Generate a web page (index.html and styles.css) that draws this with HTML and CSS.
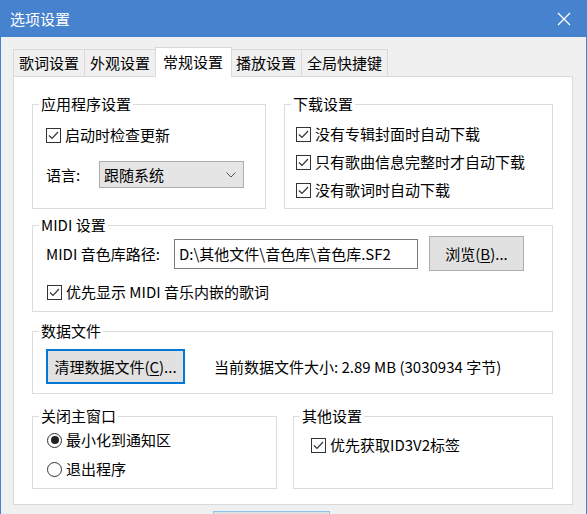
FILE: index.html
```html
<!DOCTYPE html>
<html lang="zh-CN">
<head>
	<meta charset="UTF-8">
	<meta name="viewport" content="width=device-width, initial-scale=1">
	<title>选项设置</title>
	<link rel="stylesheet" href="styles.css">
</head>
<body>
<div class="window">
	<div class="titlebar">
		<span class="title">选项设置</span>
		<svg class="close" width="14" height="14" viewBox="0 0 14 14"><path d="M1 1L13 13M13 1L1 13" stroke="#fff" stroke-width="1.3" fill="none"/></svg>
	</div>
	<div class="client">
		<div class="tabs">
			<div class="tab">歌词设置</div>
			<div class="tab">外观设置</div>
			<div class="tab active">常规设置</div>
			<div class="tab">播放设置</div>
			<div class="tab">全局快捷键</div>
		</div>
		<div class="panel">
			<div class="row top-row">
				<fieldset class="group app">
					<legend>应用程序设置</legend>
					<div class="inner">
						<label class="check">
							<svg class="box" width="15" height="15" viewBox="0 0 15 15"><rect x="0.5" y="0.5" width="14" height="14" fill="#fff" stroke="#333"/><path d="M3 7.5L6 10.5L12 4" stroke="#333" stroke-width="1.2" fill="none"/></svg>
							启动时检查更新
						</label>
						<div class="lang">
							<span class="lang-label">语言:</span>
							<div class="combo">
								<span>跟随系统</span>
								<svg width="10" height="6" viewBox="0 0 10 6"><path d="M0.5 0.5L5 5L9.5 0.5" stroke="#555" stroke-width="1" fill="none"/></svg>
							</div>
						</div>
					</div>
				</fieldset>
				<fieldset class="group download">
					<legend>下载设置</legend>
					<div class="inner">
						<label class="check">
							<svg class="box" width="15" height="15" viewBox="0 0 15 15"><rect x="0.5" y="0.5" width="14" height="14" fill="#fff" stroke="#333"/><path d="M3 7.5L6 10.5L12 4" stroke="#333" stroke-width="1.2" fill="none"/></svg>
							没有专辑封面时自动下载
						</label>
						<label class="check">
							<svg class="box" width="15" height="15" viewBox="0 0 15 15"><rect x="0.5" y="0.5" width="14" height="14" fill="#fff" stroke="#333"/><path d="M3 7.5L6 10.5L12 4" stroke="#333" stroke-width="1.2" fill="none"/></svg>
							只有歌曲信息完整时才自动下载
						</label>
						<label class="check">
							<svg class="box" width="15" height="15" viewBox="0 0 15 15"><rect x="0.5" y="0.5" width="14" height="14" fill="#fff" stroke="#333"/><path d="M3 7.5L6 10.5L12 4" stroke="#333" stroke-width="1.2" fill="none"/></svg>
							没有歌词时自动下载
						</label>
					</div>
				</fieldset>
			</div>

			<fieldset class="group midi">
				<legend>MIDI 设置</legend>
				<div class="inner">
					<div class="path-row">
						<span class="path-label">MIDI 音色库路径:</span>
						<div class="textbox">D:\其他文件\音色库\音色库.SF2</div>
						<button class="btn browse">浏览(<u>B</u>)...</button>
					</div>
					<label class="check">
						<svg class="box" width="15" height="15" viewBox="0 0 15 15"><rect x="0.5" y="0.5" width="14" height="14" fill="#fff" stroke="#333"/><path d="M3 7.5L6 10.5L12 4" stroke="#333" stroke-width="1.2" fill="none"/></svg>
						优先显示 MIDI 音乐内嵌的歌词
					</label>
				</div>
			</fieldset>

			<fieldset class="group data">
				<legend>数据文件</legend>
				<div class="inner">
					<button class="btn clean">清理数据文件(<u>C</u>)...</button>
					<span class="size">当前数据文件大小: 2.89 MB (3030934 字节)</span>
				</div>
			</fieldset>

			<div class="row bottom-row">
				<fieldset class="group close-main">
					<legend>关闭主窗口</legend>
					<div class="inner">
						<label class="radio"><span class="dot on"></span>最小化到通知区</label>
						<label class="radio"><span class="dot"></span>退出程序</label>
					</div>
				</fieldset>
				<fieldset class="group other">
					<legend>其他设置</legend>
					<div class="inner">
						<label class="check">
							<svg class="box" width="15" height="15" viewBox="0 0 15 15"><rect x="0.5" y="0.5" width="14" height="14" fill="#fff" stroke="#333"/><path d="M3 7.5L6 10.5L12 4" stroke="#333" stroke-width="1.2" fill="none"/></svg>
							优先获取ID3V2标签
						</label>
					</div>
				</fieldset>
			</div>
		</div>
		<div class="footer">
			<div class="ok"></div>
		</div>
	</div>
</div>
</body>
</html>
```

FILE: styles.css
```css
* {
	box-sizing: border-box;
}
html, body {
	margin: 0;
	padding: 0;
	height: 100%;
	overflow: hidden;
}
body {
	font-family: "Noto Sans CJK SC", "Noto Sans", sans-serif;
	font-size: 15px;
	line-height: 20px;
	color: #000;
	background: #f0f0f0;
}
.window {
	height: 100%;
	border-left: 1px solid #4682cd;
	border-right: 1px solid #4682cd;
	display: flex;
	flex-direction: column;
}
.titlebar {
	height: 37px;
	background: #4682cd;
	display: flex;
	align-items: center;
	justify-content: space-between;
	padding: 0 15px 0 9px;
	flex-shrink: 0;
}
.title {
	color: #fff;
	font-size: 15px;
}
.client {
	padding: 10px 13px 0 12px;
}

/* tabs */
.tabs {
	display: flex;
	align-items: flex-end;
	height: 29px;
	padding-left: 1px;
}
.tab {
	height: 27px;
	line-height: 25px;
	padding: 0 5px;
	border: 1px solid #d9d9d9;
	border-bottom: none;
	margin-left: -1px;
	background: #f0f0f0;
	white-space: nowrap;
}
.tab.active {
	height: 30px;
	line-height: 27px;
	padding: 0 8px 0 7px;
	margin: 0 -1px -1px -1px;
	background: #fff;
	position: relative;
	z-index: 1;
}
.panel {
	background: #fff;
	border: 1px solid #d9d9d9;
	padding: 17px 19px 16px 18px;
	height: 429px;
}

/* group boxes */
.row {
	display: flex;
}
.group {
	margin: 0;
	padding: 0;
	min-width: 0;
	border: 1px solid #dcdcdc;
}
.group legend {
	margin-left: 6px;
	padding: 0 2px;
	line-height: 20px;
}
.top-row .app {
	width: 234px;
	margin-right: 18px;
}
.top-row .download {
	flex: 1;
}
.app .inner {
	padding: 10px 0 19px 13px;
}
.download .inner {
	padding: 9px 0 7px 11px;
	display: flex;
	flex-direction: column;
	gap: 6px;
}
.check, .radio {
	display: flex;
	align-items: center;
	gap: 4px;
	height: 22px;
	white-space: nowrap;
}
.box {
	flex-shrink: 0;
}
.lang {
	display: flex;
	align-items: center;
	margin-top: 15px;
}
.lang-label {
	width: 53px;
}
.combo {
	width: 145px;
	height: 27px;
	background: #e5e5e5;
	border: 1px solid #adadad;
	display: flex;
	align-items: center;
	justify-content: space-between;
	padding: 0 7px 0 4px;
}

.midi {
	margin-top: 6px;
}
.midi .inner {
	padding: 1px 0 8px 13px;
}
.path-row {
	display: flex;
	align-items: center;
	height: 35px;
	margin-bottom: 10px;
}
.path-label {
	width: 128px;
}
.textbox {
	width: 244px;
	height: 30px;
	border: 1px solid #7a7a7a;
	padding: 0 4px;
	line-height: 28px;
	white-space: nowrap;
	margin-right: 11px;
}
.btn {
	font: inherit;
	color: #000;
	background: #e1e1e1;
	border: 1px solid #adadad;
	padding: 0;
	margin: 0;
}
.btn u {
	text-decoration-thickness: 1px;
	text-underline-offset: 2px;
}
.browse {
	width: 95px;
	height: 35px;
}
.midi .check {
	margin-left: 1px;
}

.data {
	margin-top: 9px;
}
.data .inner {
	display: flex;
	align-items: center;
	padding: 8px 0 9px 13px;
}
.clean {
	width: 139px;
	height: 35px;
	border: 2px solid #0078d7;
	margin-right: 29px;
}

.bottom-row {
	margin-top: 12px;
}
.close-main {
	width: 245px;
	margin-right: 16px;
}
.other {
	flex: 1;
}
.close-main .inner {
	padding: 3px 0 8px 14px;
	display: flex;
	flex-direction: column;
	gap: 7px;
}
.other .inner {
	padding: 8px 0 0 17px;
}
.dot {
	width: 15px;
	height: 15px;
	border: 1px solid #333;
	border-radius: 50%;
	background: #fff;
	display: flex;
	align-items: center;
	justify-content: center;
	flex-shrink: 0;
}
.dot.on::after {
	content: "";
	width: 8px;
	height: 8px;
	border-radius: 50%;
	background: #222;
}

.footer {
	padding: 6px 0 0 200px;
}
.ok {
	width: 117px;
	height: 30px;
	background: #e1e1e1;
	border: 1px solid #8cc4ef;
}
```
